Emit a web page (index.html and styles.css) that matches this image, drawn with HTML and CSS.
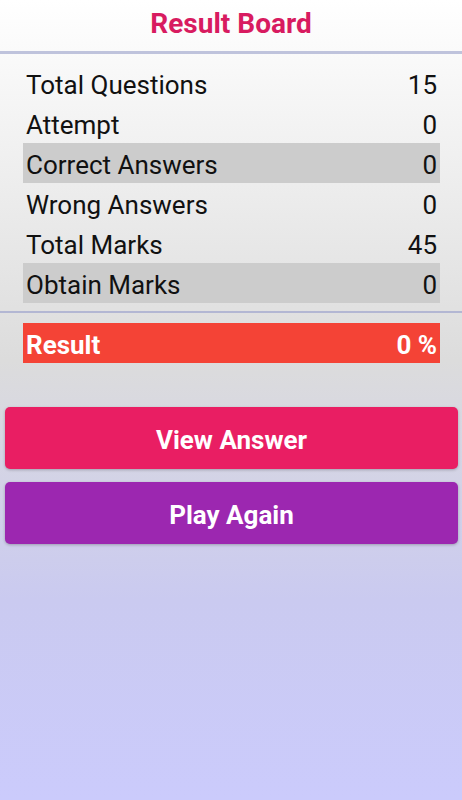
FILE: index.html
```html
<!DOCTYPE html>
<html lang="en">
<head>
<meta charset="utf-8">
<title>Result Board</title>
<link rel="stylesheet" href="styles.css">
</head>
<body>
<div class="page">
  <header class="header">
    <h1 class="title">Result Board</h1>
  </header>
  <div class="divider thick"></div>
  <section class="stats">
    <div class="row"><span>Total Questions</span><span>15</span></div>
    <div class="row"><span>Attempt</span><span>0</span></div>
    <div class="row shaded"><span>Correct Answers</span><span>0</span></div>
    <div class="row"><span>Wrong Answers</span><span>0</span></div>
    <div class="row"><span>Total Marks</span><span>45</span></div>
    <div class="row shaded"><span>Obtain Marks</span><span>0</span></div>
  </section>
  <div class="divider thin"></div>
  <section class="result-wrap">
    <div class="result"><span>Result</span><span>0 %</span></div>
  </section>
  <section class="actions">
    <button class="btn view">View Answer</button>
    <button class="btn play">Play Again</button>
  </section>
</div>
</body>
</html>
```

FILE: styles.css
```css
*, *::before, *::after {
  box-sizing: border-box;
}
html, body {
  margin: 0;
  padding: 0;
}
body {
  min-height: 800px;
  background: linear-gradient(to bottom, #ffffff 0%, #dcdcdc 45%, #cacaf0 75%, #cbcbfc 100%);
  font-family: Roboto, "Liberation Sans", Arial, sans-serif;
  color: #111;
}
.page {
  display: flex;
  flex-direction: column;
}
.header {
  height: 51px;
  display: flex;
  align-items: center;
  justify-content: center;
}
.title {
  margin: 0;
  font-size: 28px;
  font-weight: 700;
  color: #d81b60;
  line-height: 1;
  padding-bottom: 4px;
}
.divider {
  background: #bfc3dc;
}
.divider.thick {
  height: 3px;
}
.divider.thin {
  height: 2px;
  margin-top: 8px;
  background: #b3b7d3;
}
.stats {
  padding: 9px 22px 0 23px;
  display: flex;
  flex-direction: column;
}
.row {
  height: 40px;
  display: flex;
  align-items: center;
  justify-content: space-between;
  padding: 3px 3px 0;
  font-size: 26px;
  color: #111;
}
.row.shaded {
  background: #cccccc;
}
.result-wrap {
  padding: 10px 22px 0 23px;
}
.result {
  height: 40px;
  display: flex;
  align-items: center;
  justify-content: space-between;
  padding: 3px 3px 0;
  background: #f44336;
  color: #fff;
  font-size: 26px;
  font-weight: 700;
}
.actions {
  padding: 44px 4px 0 5px;
  display: flex;
  flex-direction: column;
  gap: 13px;
}
.btn {
  height: 62px;
  border: none;
  border-radius: 5px;
  padding: 3px 0 0;
  color: #fff;
  font-family: Roboto, "Liberation Sans", Arial, sans-serif;
  font-size: 26px;
  font-weight: 700;
  box-shadow: 0 1px 3px rgba(0, 0, 0, 0.25);
}
.btn.view {
  background: #e91e63;
}
.btn.play {
  background: #9c27b0;
}
```
